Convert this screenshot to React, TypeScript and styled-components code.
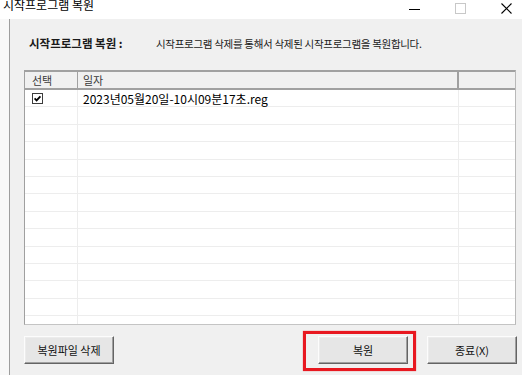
import { FC } from "react"
import styled, { createGlobalStyle } from "styled-components"

const GlobalStyle = createGlobalStyle`
  html, body {
    margin: 0;
    padding: 0;
  }
  body {
    width: 522px;
    height: 375px;
    overflow: hidden;
    background: #fff;
    font-family: "Noto Sans CJK KR", "Noto Sans", sans-serif;
    color: #000;
  }
`

const EMPTY_ROWS = 13

const MinimizeIcon = () => (
  <svg width="11" height="11" viewBox="0 0 11 11">
    <path d="M0 6.5 H11" stroke="#000" strokeWidth="1" />
  </svg>
)

const MaximizeIcon = () => (
  <svg width="11" height="11" viewBox="0 0 11 11">
    <rect x="0.5" y="0.5" width="10" height="10" fill="none" stroke="#c8c8c8" />
  </svg>
)

const CloseIcon = () => (
  <svg width="11" height="11" viewBox="0 0 11 11">
    <path d="M0.5 0.5 L10.5 10.5 M10.5 0.5 L0.5 10.5" stroke="#000" strokeWidth="1.1" />
  </svg>
)

const CheckIcon = () => (
  <svg width="11" height="11" viewBox="0 0 11 11">
    <rect x="0.5" y="0.5" width="10" height="10" fill="#fff" stroke="#3c3c3c" />
    <path d="M2.6 5.4 L4.6 7.4 L8.4 3.4" stroke="#000" strokeWidth="1.8" fill="none" />
  </svg>
)

const App: FC = () => {
  return (
    <Window>
      <GlobalStyle />
      <TitleBar>
        <Title>시작프로그램 복원</Title>
        <CaptionButton>
          <MinimizeIcon />
        </CaptionButton>
        <CaptionButton>
          <MaximizeIcon />
        </CaptionButton>
        <CaptionButton $edge>
          <CloseIcon />
        </CaptionButton>
      </TitleBar>
      <Body>
        <Edge />
        <Content>
          <InfoRow>
            <Label>시작프로그램 복원 :</Label>
            <Description>시작프로그램 삭제를 통해서 삭제된 시작프로그램을 복원합니다.</Description>
          </InfoRow>
          <ListView>
            <HeaderRow>
              <HeaderCell>선택</HeaderCell>
              <HeaderCell $strong>일자</HeaderCell>
              <HeaderCell />
            </HeaderRow>
            <ListBody>
              <Row>
                <Cell $check>
                  <CheckIcon />
                </Cell>
                <Cell>2023년05월20일-10시09분17초.reg</Cell>
                <Cell />
              </Row>
              {Array.from({ length: EMPTY_ROWS }).map((_, i) => (
                <Row key={i}>
                  <Cell />
                  <Cell />
                  <Cell />
                </Row>
              ))}
            </ListBody>
          </ListView>
          <ButtonRow>
            <Button>복원파일 삭제</Button>
            <ButtonGroup>
              <Marked>
                <Button>복원</Button>
                <Highlight />
              </Marked>
              <Button>종료(X)</Button>
            </ButtonGroup>
          </ButtonRow>
        </Content>
      </Body>
    </Window>
  )
}
export default App

const Window = styled.div`
  width: 522px;
  height: 375px;
  display: flex;
  flex-direction: column;
  overflow: hidden;
`

const TitleBar = styled.div`
  flex: none;
  height: 19px;
  display: flex;
  align-items: flex-start;
  background: #fff;
  overflow: hidden;
`

const Title = styled.div`
  flex: 1;
  min-width: 0;
  margin-top: -2px;
  padding-left: 3px;
  font-size: 12px;
  line-height: 14px;
  white-space: nowrap;
`

// the close button runs past the right edge of the crop, so only part of it shows
const CaptionButton = styled.div<{ $edge?: boolean }>`
  flex: none;
  width: ${(p) => (p.$edge ? 39 : 46)}px;
  height: 16px;
  box-sizing: border-box;
  display: flex;
  align-items: center;
  justify-content: ${(p) => (p.$edge ? "flex-start" : "center")};
  padding-left: ${(p) => (p.$edge ? 18 : 0)}px;
`

const Body = styled.div`
  flex: 1;
  min-height: 0;
  display: flex;
`

const Edge = styled.div`
  flex: none;
  width: 9px;
  background: #f8f8f8;
  border-right: 1px solid #9d9d9d;
`

const Content = styled.div`
  flex: 1;
  display: flex;
  flex-direction: column;
  padding: 14px 0 0 14px;
  background: #f0f0f0;
`

const InfoRow = styled.div`
  height: 20px;
  display: flex;
  align-items: center;
  padding-left: 5px;
  white-space: nowrap;
`

const Label = styled.span`
  width: 127px;
  flex: none;
  font-size: 11.5px;
  font-weight: 700;
  color: #1a1a1a;
`

const Description = styled.span`
  font-size: 10.5px;
  letter-spacing: -0.3px;
  color: #1a1a1a;
`

const ListView = styled.div`
  margin-top: 17px;
  width: 492px;
  height: 255px;
  box-sizing: border-box;
  display: flex;
  flex-direction: column;
  background: #fff;
  border: 1px solid;
  border-color: #a0a0a0 #b9b9b9 #c4c4c4 #a0a0a0;
`

const columns = "53px 381px 1fr"

const HeaderRow = styled.div`
  flex: none;
  height: 19px;
  box-sizing: border-box;
  display: grid;
  grid-template-columns: ${columns};
  background: #f0f0f0;
  border-top: 1px solid #a0a0a0;
  border-bottom: 2px solid #a0a0a0;
`

const HeaderCell = styled.div<{ $strong?: boolean }>`
  display: flex;
  align-items: center;
  padding-left: ${(p) => (p.$strong ? 5 : 7)}px;
  font-size: 11px;
  color: #3a3a3a;
  border-right: ${(p) => (p.$strong ? 2 : 1)}px solid #a0a0a0;
  &:last-child {
    border-right: none;
  }
`

const ListBody = styled.div`
  flex: 1;
  min-height: 0;
  overflow: hidden;
`

const Row = styled.div`
  height: 17.4px;
  box-sizing: border-box;
  display: grid;
  grid-template-columns: ${columns};
  border-bottom: 1px solid #ededed;
`

const Cell = styled.div<{ $check?: boolean }>`
  display: flex;
  align-items: center;
  padding-left: ${(p) => (p.$check ? 7 : 5)}px;
  font-size: 12px;
  white-space: nowrap;
  border-right: 1px solid #ededed;
  &:last-child {
    border-right: none;
  }
`

const ButtonRow = styled.div`
  margin-top: 11px;
  width: 493px;
  display: flex;
  align-items: center;
  justify-content: space-between;
`

const ButtonGroup = styled.div`
  display: flex;
  gap: 19px;
`

const Marked = styled.div`
  position: relative;
`

const Highlight = styled.span`
  position: absolute;
  top: -5px;
  bottom: -7px;
  left: -15px;
  right: -8px;
  border: 3px solid #e81820;
  box-shadow: 0 0 1px rgba(230, 0, 0, 0.6);
  pointer-events: none;
`

const Button = styled.div`
  width: 90px;
  height: 28px;
  box-sizing: border-box;
  display: flex;
  align-items: center;
  justify-content: center;
  font-size: 11px;
  background: #e6e6e6;
  border: 1px solid;
  border-color: #fcfcfc #646464 #646464 #fcfcfc;
  box-shadow: inset -1px -1px 0 #a0a0a0, inset 1px 1px 0 #ececec;
  color: #111;
  cursor: default;
`
